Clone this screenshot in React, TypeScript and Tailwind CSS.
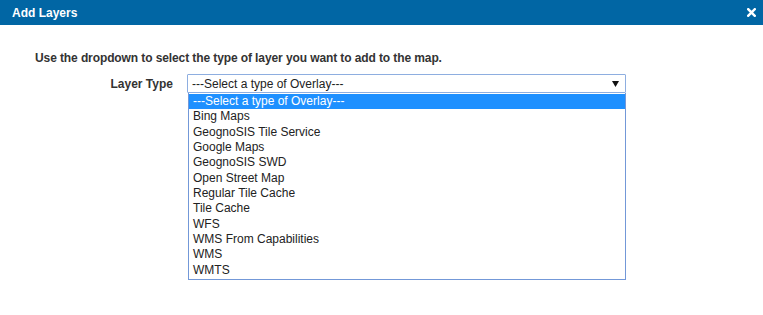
import React from "react";

const options = [
  "---Select a type of Overlay---",
  "Bing Maps",
  "GeognoSIS Tile Service",
  "Google Maps",
  "GeognoSIS SWD",
  "Open Street Map",
  "Regular Tile Cache",
  "Tile Cache",
  "WFS",
  "WMS From Capabilities",
  "WMS",
  "WMTS",
];

const App: React.FC = () => {
  return (
    <div
      className="w-[763px] h-[315px] bg-white text-[12px] text-[#222]"
      style={{ fontFamily: '"Liberation Sans", Arial, sans-serif' }}
    >
      <div className="h-[25px] bg-[#0166a4] flex items-center justify-between pl-[12px] pr-[7px]">
        <span className="font-bold text-white text-[12px]">Add Layers</span>
        <svg width="9" height="9" viewBox="0 0 9 9" className="mt-[-1px]">
          <path
            d="M1.2 1.2 L7.8 7.8 M7.8 1.2 L1.2 7.8"
            stroke="#fff"
            strokeWidth="2.4"
            strokeLinecap="square"
          />
        </svg>
      </div>

      <div className="pl-[35px] pt-[26px]">
        <p className="font-bold text-[#333] leading-[14px] tracking-[-0.1px]">
          Use the dropdown to select the type of layer you want to add to the map.
        </p>

        <div className="flex items-center mt-[9px]">
          <label className="w-[138px] text-right font-bold text-[#333]">
            Layer Type
          </label>
          <div className="relative ml-[14px]">
            <div className="w-[439px] h-[19px] border border-[#8eaee0] rounded-[1px] flex items-center justify-between pl-[4px] pr-[6px]">
              <span className="leading-[14px]">---Select a type of Overlay---</span>
              <svg width="7" height="6" viewBox="0 0 7 6">
                <path d="M0 0 H7 L3.5 6 Z" fill="#111" />
              </svg>
            </div>
            <ul className="absolute left-[1px] top-[19px] w-[438px] pt-[1px] pb-[1px] border border-t-0 border-[#7398d8] bg-white">
              {options.map((opt, i) => (
                <li
                  key={opt}
                  className={`h-[15.35px] leading-[15.35px] pl-[4px] ${
                    i === 0 ? "bg-[#1e90ff] text-white" : ""
                  }`}
                >
                  {opt}
                </li>
              ))}
            </ul>
          </div>
        </div>
      </div>
    </div>
  );
};

export default App;
